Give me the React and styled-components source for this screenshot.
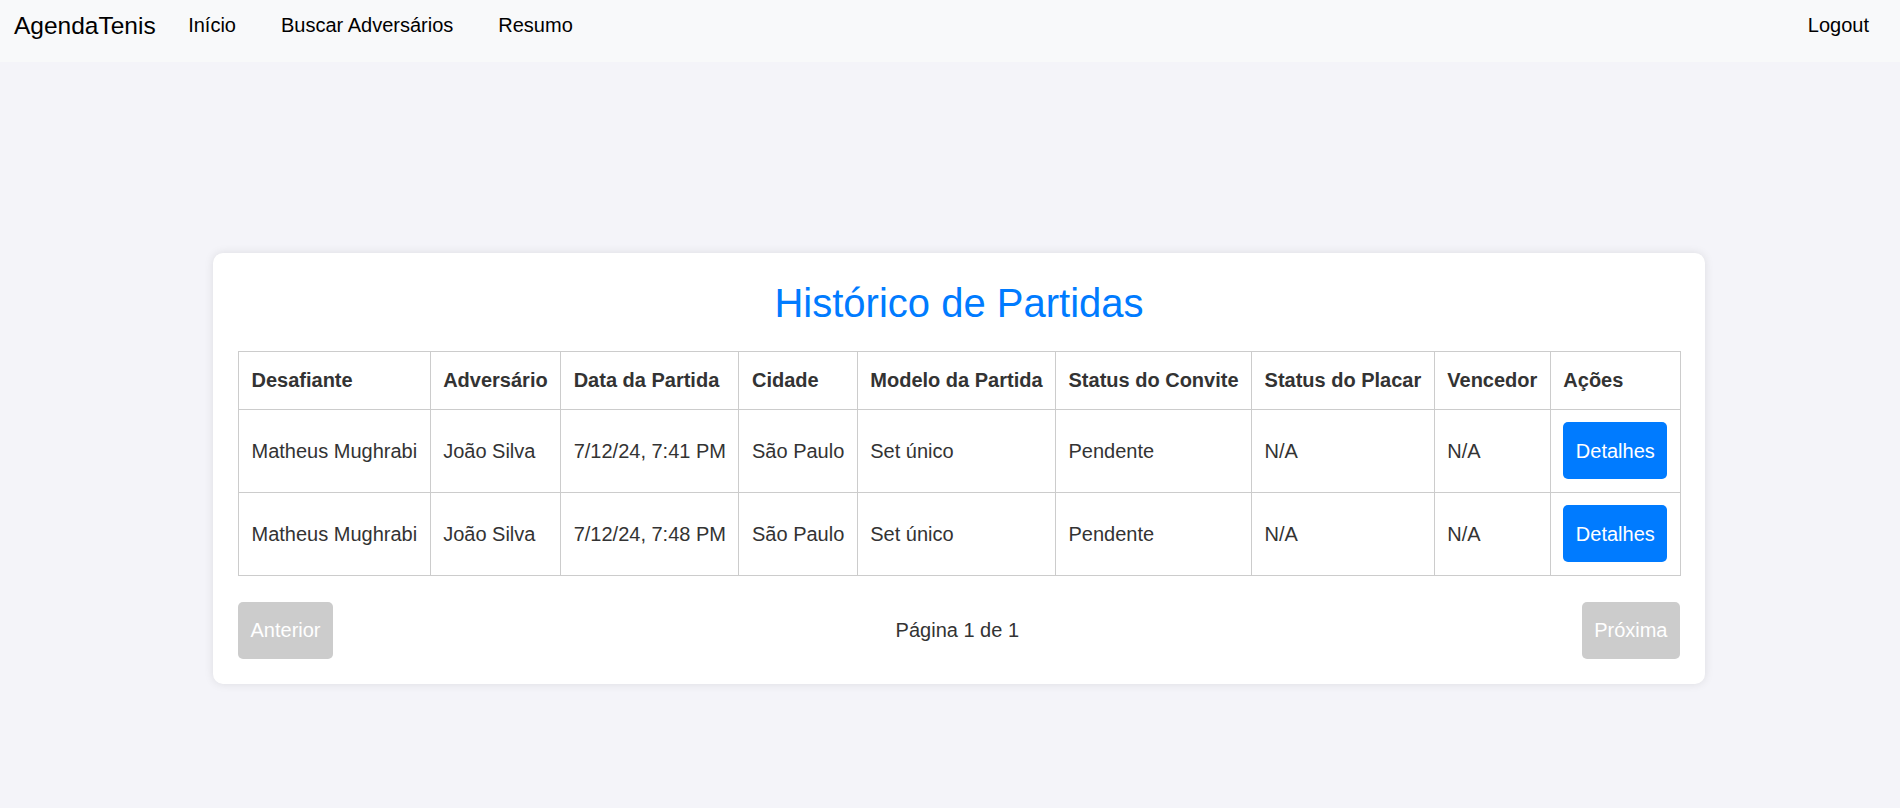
import React from 'react';
import styled, { createGlobalStyle } from 'styled-components';

const GlobalStyle = createGlobalStyle`
  * {
    box-sizing: border-box;
  }

  body {
    margin: 0;
    font-family: "Liberation Sans", Arial, sans-serif;
    font-size: 20px;
    line-height: 1.6;
    color: #333;
    background-color: #f4f4f9;
  }
`;

const NavBar = styled.nav`
  display: flex;
  align-items: flex-start;
  height: 62px;
  padding: 12px 8.5px 0 14px;
  background-color: #f8f9fa;
`;

const Brand = styled.a`
  margin-right: 10px;
  font-size: 24.5px;
  line-height: normal;
  color: #000;
  text-decoration: none;
  cursor: pointer;
`;

const NavLinks = styled.div`
  display: flex;
  flex: 1;
`;

const NavLink = styled.a`
  padding: 1.5px 22.5px 0;
  font-size: 20px;
  line-height: normal;
  color: #000;
  text-decoration: none;
  cursor: pointer;
  margin-left: ${({ $right }) => ($right ? 'auto' : '0')};
`;

const Main = styled.main`
  display: flex;
  justify-content: center;
  align-items: center;
  min-height: 100vh;
  padding: 4px 0 0 18px;
`;

const Card = styled.section`
  width: 1492px;
  padding: 25px;
  background: #fff;
  border-radius: 10px;
  box-shadow: 0 0 10px rgba(0, 0, 0, 0.1);
`;

const Title = styled.h1`
  margin: 3px 0 25px;
  font-size: 40px;
  font-weight: normal;
  line-height: normal;
  text-align: center;
  color: #007bff;
`;

const Table = styled.table`
  width: 100%;
  border-collapse: collapse;

  th,
  td {
    padding: 12.5px;
    border: 1px solid #ccc;
    text-align: left;
    white-space: nowrap;
  }

  th {
    font-weight: bold;
  }
`;

const Button = styled.button`
  padding: 12.5px;
  border: none;
  border-radius: 5px;
  font-family: "Liberation Sans", Arial, sans-serif;
  font-size: 20px;
  line-height: 1.6;
  color: #fff;
  background-color: ${({ disabled }) => (disabled ? '#ccc' : '#007bff')};
  cursor: ${({ disabled }) => (disabled ? 'not-allowed' : 'pointer')};
  display: block;
`;

const Pagination = styled.div`
  display: flex;
  justify-content: space-between;
  align-items: center;
  margin-top: 26px;
`;

const matches = [
  { id: 1, desafiante: 'Matheus Mughrabi', adversario: 'João Silva', data: '7/12/24, 7:41 PM', cidade: 'São Paulo', modelo: 'Set único', convite: 'Pendente', placar: 'N/A', vencedor: 'N/A' },
  { id: 2, desafiante: 'Matheus Mughrabi', adversario: 'João Silva', data: '7/12/24, 7:48 PM', cidade: 'São Paulo', modelo: 'Set único', convite: 'Pendente', placar: 'N/A', vencedor: 'N/A' },
];

const headers = ['Desafiante', 'Adversário', 'Data da Partida', 'Cidade', 'Modelo da Partida', 'Status do Convite', 'Status do Placar', 'Vencedor', 'Ações'];

const App = () => {
  return (
    <>
      <GlobalStyle />
      <NavBar>
        <Brand>AgendaTenis</Brand>
        <NavLinks>
          <NavLink>Início</NavLink>
          <NavLink>Buscar Adversários</NavLink>
          <NavLink>Resumo</NavLink>
          <NavLink $right>Logout</NavLink>
        </NavLinks>
      </NavBar>

      <Main>
        <Card>
          <Title>Histórico de Partidas</Title>
          <Table>
            <thead>
              <tr>
                {headers.map(h => (
                  <th key={h}>{h}</th>
                ))}
              </tr>
            </thead>
            <tbody>
              {matches.map(m => (
                <tr key={m.id}>
                  <td>{m.desafiante}</td>
                  <td>{m.adversario}</td>
                  <td>{m.data}</td>
                  <td>{m.cidade}</td>
                  <td>{m.modelo}</td>
                  <td>{m.convite}</td>
                  <td>{m.placar}</td>
                  <td>{m.vencedor}</td>
                  <td>
                    <Button>Detalhes</Button>
                  </td>
                </tr>
              ))}
            </tbody>
          </Table>
          <Pagination>
            <Button disabled>Anterior</Button>
            <span>Página 1 de 1</span>
            <Button disabled>Próxima</Button>
          </Pagination>
        </Card>
      </Main>
    </>
  );
};

export default App;
